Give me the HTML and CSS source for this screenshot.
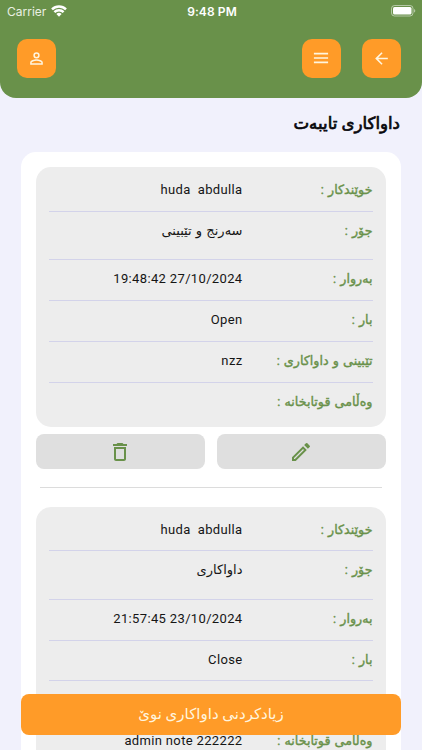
FILE: index.html
```html
<!DOCTYPE html>
<html lang="ckb" dir="rtl">
<head>
    <meta charset="UTF-8">
    <meta name="viewport" content="width=device-width, initial-scale=1.0">
    <title>داواکاری تایبەت</title>
    <link rel="stylesheet" href="styles.css">
</head>
<body>
    <header class="header">
        <div class="status" dir="ltr">
            <div class="carrier">
                <span>Carrier</span>
                <svg width="16" height="12" viewBox="0 0 16 12" fill="none" stroke="#fff" stroke-width="2.4">
                    <path d="M1 4.3a10 10 0 0 1 14 0M3.4 7.2a6.5 6.5 0 0 1 9.2 0"/>
                    <path d="M8 11.7L5.4 9.1a3.7 3.7 0 0 1 5.2 0z" fill="#fff" stroke="none"/>
                </svg>
            </div>
            <span class="time">9:48 PM</span>
            <svg class="battery" width="26" height="12" viewBox="0 0 26 12">
                <rect x=".5" y=".5" width="21.5" height="10.5" rx="3" fill="none" stroke="#fff" stroke-opacity=".5"/>
                <rect x="2" y="2" width="18.5" height="7.5" rx="1.5" fill="#fff"/>
                <path d="M23.2 4v3.6c1.4-.5 1.4-3.1 0-3.6z" fill="#fff" fill-opacity=".6"/>
            </svg>
        </div>
        <nav class="toolbar">
            <button class="icon-btn">
                <svg width="19" height="19" viewBox="0 0 24 24"><path d="M20 11H7.83l5.59-5.59L12 4l-8 8 8 8 1.41-1.41L7.83 13H20z" /></svg>
            </button>
            <button class="icon-btn">
                <svg width="20" height="20" viewBox="0 0 24 24"><path d="M3.5 5.8h17v2h-17zM3.5 11h17v2h-17zM3.5 16.2h17v2h-17z"/></svg>
            </button>
            <button class="icon-btn profile">
                <svg width="19" height="19" viewBox="0 0 24 24"><path d="M12 5.9a2.1 2.1 0 1 1 0 4.2 2.1 2.1 0 0 1 0-4.2m0 9c2.97 0 6.1 1.46 6.1 2.1v1.1H5.9V17c0-.64 3.13-2.1 6.1-2.1M12 4a4 4 0 1 0 0 8 4 4 0 0 0 0-8m0 9c-2.67 0-8 1.34-8 4v3h16v-3c0-2.66-5.33-4-8-4"/></svg>
            </button>
        </nav>
    </header>

    <h1>داواکاری تایبەت</h1>

    <main class="list">
        <section class="request">
            <div class="row"><span class="label">خوێندکار :</span><bdi class="value" dir="ltr">huda  abdulla</bdi></div>
            <div class="row tall"><span class="label">جۆر :</span><span class="value kurdish">سەرنج و تێبینی</span></div>
            <div class="row"><span class="label">بەروار :</span><bdi class="value" dir="ltr">19:48:42 27/10/2024</bdi></div>
            <div class="row"><span class="label">بار :</span><bdi class="value" dir="ltr">Open</bdi></div>
            <div class="row"><span class="label">تێبینی و داواکاری :</span><bdi class="value" dir="ltr">nzz</bdi></div>
            <div class="row"><span class="label">وەڵامی قوتابخانە :</span></div>
        </section>
        <div class="actions">
            <button>
                <svg width="24" height="24" viewBox="0 0 24 24"><path d="M3 17.25V21h3.75L17.81 9.94l-3.75-3.75zM5.92 19H5v-.92l9.06-9.06.92.92zM20.71 5.63l-2.34-2.34a1 1 0 0 0-1.41 0l-1.83 1.83 3.75 3.75 1.83-1.83a1 1 0 0 0 0-1.41"/></svg>
            </button>
            <button>
                <svg width="24" height="24" viewBox="0 0 24 24"><path d="M6 19c0 1.1.9 2 2 2h8c1.1 0 2-.9 2-2V7H6zM8 9h8v10H8zm7.5-5-1-1h-5l-1 1H5v2h14V4z"/></svg>
            </button>
        </div>
        <hr>
        <section class="request">
            <div class="row"><span class="label">خوێندکار :</span><bdi class="value" dir="ltr">huda  abdulla</bdi></div>
            <div class="row tall"><span class="label">جۆر :</span><span class="value kurdish">داواکاری</span></div>
            <div class="row"><span class="label">بەروار :</span><bdi class="value" dir="ltr">21:57:45 23/10/2024</bdi></div>
            <div class="row"><span class="label">بار :</span><bdi class="value" dir="ltr">Close</bdi></div>
            <div class="row"></div>
            <div class="row"><span class="label">وەڵامی قوتابخانە :</span><bdi class="value" dir="ltr">admin note 222222</bdi></div>
        </section>
    </main>

    <button class="add-btn">زیادکردنی داواکاری نوێ</button>
</body>
</html>
```
FILE: styles.css
```css
* {
    box-sizing: border-box;
}
body {
    display: flex;
    flex-direction: column;
    margin: 0;
    height: 100vh;
    overflow: hidden;
    background-color: #f1f1fc;
    font-family: Roboto, "DejaVu Sans", sans-serif;
    color: #151515;
}
button {
    padding: 0;
    border: none;
    font-family: inherit;
}
svg {
    display: block;
}
.header {
    flex: none;
    height: 97.5px;
    background-color: #69914a;
    border-radius: 0 0 16px 16px;
}
.status {
    display: grid;
    grid-template-columns: 1fr auto 1fr;
    align-items: center;
    height: 22px;
    padding: 0 5px 0 7px;
    font-family: Inter, sans-serif;
    font-size: 12px;
    color: #fff;
}
.carrier {
    display: flex;
    gap: 5px;
    align-items: center;
    color: #e9f0e2;
}
.time {
    font-weight: 600;
    letter-spacing: 0.1px;
}
.battery {
    justify-self: end;
}
.toolbar {
    display: flex;
    gap: 21px;
    padding: 16.5px 21.5px 0 17px;
}
.icon-btn {
    display: flex;
    align-items: center;
    justify-content: center;
    width: 39px;
    height: 39px;
    border-radius: 10px;
    background-color: #ff9b28;
    fill: #fff5df;
}
.profile {
    margin-right: auto;
}
h1 {
    flex: none;
    margin: 11.5px 22px 0;
    height: 29px;
    line-height: 29px;
    font-size: 16.6px;
    font-weight: normal;
    color: #08080c;
    -webkit-text-stroke: 0.7px #08080c;
}
.list {
    flex: 1;
    min-height: 0;
    margin: 14px 21.5px 0 21px;
    padding: 15px;
    overflow: hidden;
    background-color: #fff;
    border-radius: 15px 15px 0 0;
}
.request {
    height: 259.5px;
    padding: 4px 13px 0;
    background-color: #ededed;
    border-radius: 15px;
}
.row {
    display: grid;
    grid-template-columns: 130px 1fr;
    height: 40.8px;
    padding-top: 9px;
    line-height: 20px;
    border-bottom: 1px solid #d3d3ea;
}
.row:last-child {
    border-bottom: none;
}
.tall {
    height: 48.5px;
}
.label {
    font-size: 12.7px;
    color: #69914a;
    white-space: nowrap;
    word-spacing: 1px;
    -webkit-text-stroke: 0.4px #69914a;
}
.value {
    justify-self: start;
    font-size: 13px;
    letter-spacing: 0.35px;
    white-space: pre;
}
.kurdish {
    letter-spacing: 0;
    word-spacing: 1px;
}
.actions {
    display: flex;
    gap: 12px;
    margin-top: 7.5px;
}
.actions button {
    display: flex;
    flex: 1;
    align-items: center;
    justify-content: center;
    height: 35px;
    border-radius: 8px;
    background-color: #dfdfdf;
    fill: #69914a;
}
hr {
    margin: 18px 4px 18.5px;
    border: none;
    border-top: 1px solid #dcdcdc;
}
.add-btn {
    position: absolute;
    left: 21px;
    right: 21px;
    bottom: 15px;
    height: 41.5px;
    border-radius: 8px;
    background-color: #ff9b28;
    color: #fff5df;
    font-size: 15px;
}
```
